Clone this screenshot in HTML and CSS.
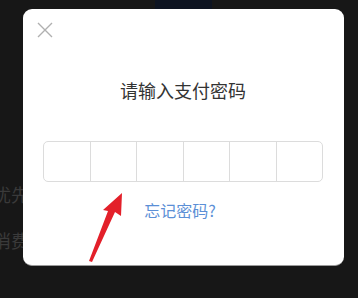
FILE: index.html
```html
<!DOCTYPE html>
<html lang="zh-CN">
  <head>
    <meta charset="UTF-8" />
    <meta name="viewport" content="width=device-width, initial-scale=1.0" />
    <title>支付密码</title>
    <link rel="stylesheet" href="styles.css">
  </head>
  <body>
    <div class="page">
      <div class="top-bar"></div>
      <div class="page-lines">
        <p>优先</p>
        <p>消费</p>
      </div>
    </div>

    <div class="dialog">
      <button class="close" type="button" aria-label="关闭">
        <svg width="16" height="16" viewBox="0 0 16 16">
          <path d="M1 1 L15 15 M15 1 L1 15" stroke="#b0b0b0" stroke-width="1.4" fill="none" />
        </svg>
      </button>
      <h2 class="title">请输入支付密码</h2>
      <div class="code-boxes">
        <span></span><span></span><span></span><span></span><span></span><span></span>
      </div>
      <a class="forgot" href="#">忘记密码?</a>
    </div>

    <svg class="arrow" width="40" height="75" viewBox="86 190 40 75">
      <polygon points="122,193 121,216 115,212 92,262 89,261 108,211 103,210" fill="#e3202a" />
    </svg>
  </body>
</html>
```

FILE: styles.css
```css
body {
  margin: 0;
  padding: 0;
  width: 358px;
  height: 298px;
  overflow: hidden;
  background-color: #171717;
  font-family: "Noto Sans CJK SC", "Noto Sans", sans-serif;
  position: relative;
}

.page {
  height: 298px;
}

.top-bar {
  width: 57px;
  height: 9px;
  margin-left: 155px;
  background-color: #0e1421;
}

.page-lines {
  margin-left: -7px;
  padding-top: 175px;
}

.page-lines p {
  margin: 0 0 26px;
  font-size: 18px;
  line-height: 20px;
  color: #3a3a3a;
}

.dialog {
  position: absolute;
  left: 23px;
  top: 9px;
  width: 321px;
  height: 257px;
  box-sizing: border-box;
  padding: 13px 21px 0 20px;
  background-color: #fff;
  border-radius: 9px;
  border-bottom: 1px solid #9a9a9a;
  display: flex;
  flex-direction: column;
  align-items: center;
}

.close {
  align-self: flex-start;
  margin-left: -6px;
  padding: 0;
  width: 16px;
  height: 16px;
  border: none;
  background: none;
  cursor: pointer;
  display: block;
}

.close svg {
  display: block;
}

.title {
  margin: 39px 0 0;
  font-size: 18px;
  line-height: 26px;
  font-weight: 400;
  color: #333;
}

.code-boxes {
  margin-top: 38px;
  width: 280px;
  height: 41px;
  box-sizing: border-box;
  display: flex;
  border: 1px solid #dcdcdc;
  border-radius: 5px;
}

.code-boxes span {
  flex: 1;
  border-left: 1px solid #dcdcdc;
}

.code-boxes span:first-child {
  border-left: none;
}

.forgot {
  margin-top: 16px;
  margin-left: -6px;
  font-size: 16px;
  line-height: 24px;
  color: #5b8fd6;
  text-decoration: none;
}

.arrow {
  position: absolute;
  left: 86px;
  top: 190px;
}
```
